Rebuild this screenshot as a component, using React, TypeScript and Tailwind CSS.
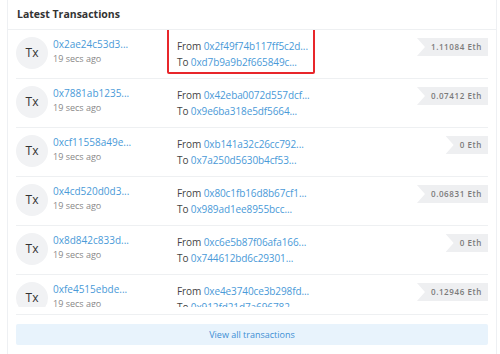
const txs = [
  { hash: '0x2ae24c53d3...', from: '0x2f49f74b117ff5c2d...', to: '0xd7b9a9b2f665849c...', amount: '1.11084 Eth' },
  { hash: '0x7881ab1235...', from: '0x42eba0072d557dcf...', to: '0x9e6ba318e5df5664...', amount: '0.07412 Eth' },
  { hash: '0xcf11558a49e...', from: '0xb141a32c26cc792...', to: '0x7a250d5630b4cf53...', amount: '0 Eth' },
  { hash: '0x4cd520d0d3...', from: '0x80c1fb16d8b67cf1...', to: '0x989ad1ee8955bcc...', amount: '0.06831 Eth' },
  { hash: '0x8d842c833d...', from: '0xc6e5b87f06afa166...', to: '0x744612bd6c29301...', amount: '0 Eth' },
  { hash: '0xfe4515ebde...', from: '0xe4e3740ce3b298fd...', to: '0x912fd21d7a696782...', amount: '0.12946 Eth' },
];

function TxRow({ tx, highlight }: { tx: typeof txs[number]; highlight?: boolean }) {
  return (
    <div className="h-[49px] flex items-start border-b border-[#eef0f2] shrink-0">
      <div className="mt-[7px] w-8 h-8 rounded-full bg-[#f1f2f4] flex items-center justify-center text-[12px] text-[#333]">
        Tx
      </div>
      <div className="ml-[5px] w-[114px] pt-[7px]">
        <div className="text-[10px] leading-[14px] text-[#4a9ad8]">{tx.hash}</div>
        <div className="text-[9px] leading-[16px] text-[#888]">19 secs ago</div>
      </div>
      <div className="relative w-[148px] pl-[10px] pt-[8px]">
        <div className="text-[10px] leading-[16px] text-[#444] whitespace-nowrap tracking-[-0.1px]">
          From <span className="text-[#4a9ad8]">{tx.from}</span>
        </div>
        <div className="text-[10px] leading-[16px] text-[#444] whitespace-nowrap tracking-[-0.1px]">
          To <span className="text-[#4a9ad8]">{tx.to}</span>
        </div>
        {highlight && (
          <div className="absolute left-0 top-[-3px] w-[148px] h-[47px] border-2 border-[#e8262b] rounded-[2px]" />
        )}
      </div>
      <div className="ml-auto mt-[8px] h-[18px] flex items-center pl-[14px] pr-[6px] bg-[#eeeff1] text-[8px] font-semibold tracking-[0.6px] text-[#7a7a7a] [clip-path:polygon(0_0,100%_0,100%_100%,0_100%,8px_50%)]">
        {tx.amount}
      </div>
    </div>
  );
}

export default function App() {
  return (
    <div className="w-[500px] h-[354px] bg-white overflow-hidden" style={{ fontFamily: '"Open Sans", sans-serif' }}>
      <div className="ml-[7px] mr-[3px] h-[354px] border-x border-[#eef0f3] bg-white">
        <div className="h-[30px] px-[9px] flex items-center border-b border-[#eef0f2]">
          <span className="text-[10.5px] font-bold text-[#333]">Latest Transactions</span>
        </div>
        <div className="px-[8px]">
          <div className="h-[277px] overflow-hidden flex flex-col">
            {txs.map((tx, i) => (
              <TxRow key={tx.hash} tx={tx} highlight={i === 0} />
            ))}
          </div>
          <div className="h-[8px] border-b border-[#eef0f2]" />
          <div className="mt-[9px] h-[21px] rounded-[2px] bg-[#e8f3fc] flex items-center justify-center text-[9px] text-[#3d8fd4]">
            View all transactions
          </div>
        </div>
      </div>
    </div>
  );
}
